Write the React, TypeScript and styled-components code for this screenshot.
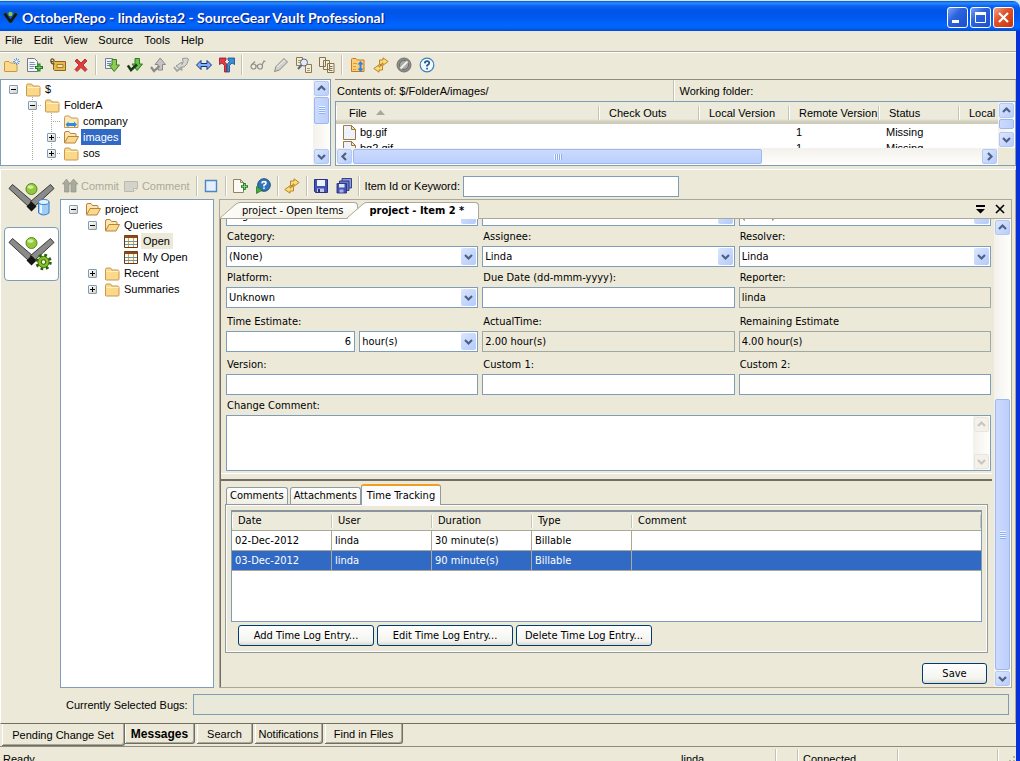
import React from "react";
import styled, { createGlobalStyle, css } from "styled-components";

const face = "#ece9d8";
const line = "#aca899";
const dark = "#716f64";
const edge = "#7f9db9";
const select = "#316ac5";
const sans = '"Liberation Sans", Arial, sans-serif';
const tahoma = '"DejaVu Sans Condensed", Tahoma, "Noto Sans", sans-serif';

const Global = createGlobalStyle`
  * { box-sizing: border-box; }
  html, body { margin: 0; height: 100%; }
  body { background: #cfe6f8; font: 11px/16px ${sans}; color: #000; overflow: hidden; }
  button, input, select, textarea { font: inherit; color: inherit; margin: 0; border-radius: 0; }
  button { border: 0; background: none; padding: 0; }
  svg { display: block; flex: none; }
`;

/* ---------- window frame ---------- */

const Window = styled.div`
  height: 100vh;
  display: flex;
  flex-direction: column;
  padding-top: 1px;
`;

const TitleBar = styled.header`
  flex: none;
  height: 30px;
  display: flex;
  align-items: center;
  gap: 4px;
  padding: 3px 6px 0 3px;
  border-top-right-radius: 7px;
  background: linear-gradient(#0a52c8 0, #2a8cff 2px, #0a63f5 5px, #0055e5 9px, #0058ee 16px, #0066ff 24px, #0062f6 27px, #0048cf 100%);
  color: #fff;
`;

const Title = styled.h1`
  flex: 1;
  margin: 0;
  font: bold 14px/20px Lato, "Noto Sans", sans-serif;
  text-shadow: 1px 1px 1px #0a1883;
  white-space: nowrap;
`;

const CaptionButtons = styled.div`
  display: flex;
  gap: 2px;
`;

const CaptionButton = styled.button<{ $close?: boolean }>`
  width: 21px;
  height: 21px;
  display: grid;
  place-items: center;
  border: 1px solid #fff;
  border-radius: 3px;
  background: ${(p) =>
    p.$close
      ? "linear-gradient(135deg, #f0a58c, #e0532c 40%, #c8340c)"
      : "linear-gradient(135deg, #7ba3f5, #2c63dd 40%, #1a4fd0)"};
`;

const Frame = styled.div`
  flex: 1;
  min-height: 0;
  display: flex;
  flex-direction: column;
  background: ${face};
  border-right: 4px solid #0831d9;
`;

const MenuBar = styled.nav`
  flex: none;
  height: 21px;
  display: flex;
  align-items: center;
  padding: 0 0 2px;
  border-bottom: 1px solid ${line};
`;

const MenuItem = styled.button`
  padding: 0 6px 0 5px;
`;

const ToolBar = styled.div`
  flex: none;
  height: 27px;
  display: flex;
  align-items: center;
  padding-bottom: 3px;
  border-top: 1px solid #fff;
`;

const Tool = styled.button`
  width: 23px;
  height: 22px;
  display: grid;
  place-items: center;
`;

const Rule = styled.span`
  width: 2px;
  height: 20px;
  margin: 0 3px;
  border-left: 1px solid #c5c2b2;
  border-right: 1px solid #fff;
`;

/* ---------- scroll bars ---------- */

const arrows = {
  up: "M1 6 L4.5 2.5 L8 6",
  down: "M1 3 L4.5 6.5 L8 3",
  left: "M6 1 L2.5 4.5 L6 8",
  right: "M3 1 L6.5 4.5 L3 8",
};

const Chevron = ({ dir, off }: { dir: keyof typeof arrows; off?: boolean }) => (
  <svg width="9" height="9" viewBox="0 0 9 9">
    <path d={arrows[dir]} fill="none" stroke={off ? "#c9c7ba" : "#4d6185"} strokeWidth="2.2" />
  </svg>
);

const Bar = styled.div<{ $horizontal?: boolean }>`
  flex: none;
  display: flex;
  flex-direction: ${(p) => (p.$horizontal ? "row" : "column")};
  gap: 1px;
  padding: 1px;
  ${(p) =>
    p.$horizontal
      ? "height: 17px; background: linear-gradient(#f3f1ec, #fefefb);"
      : "width: 17px; background: linear-gradient(90deg, #f3f1ec, #fefefb);"}
`;

const BarButton = styled.button<{ $off?: boolean }>`
  flex: none;
  width: 15px;
  height: 15px;
  display: grid;
  place-items: center;
  border: 1px solid ${(p) => (p.$off ? "#e8e6dc" : "#b4c8f6")};
  border-radius: 2px;
  background: ${(p) => (p.$off ? "#f3f1ea" : "linear-gradient(135deg, #dbe6fe, #b9cdfa)")};
`;

const Space = styled.span<{ $grow: number }>`
  flex: ${(p) => p.$grow} 1 0;
`;

const PlainThumb = styled.span<{ $grow: number; $horizontal?: boolean }>`
  flex: ${(p) => p.$grow} 1 0;
  display: grid;
  place-items: center;
  border: 1px solid #9db8f0;
  border-radius: 2px;
  background: linear-gradient(${(p) => (p.$horizontal ? "180deg" : "90deg")}, #cbdafe, #bccffb);
`;

const Thumb = styled(PlainThumb)`
  &::before {
    content: "";
    ${(p) =>
      p.$horizontal
        ? "width: 8px; height: 6px; background: repeating-linear-gradient(90deg, #eef4fe 0 1px, #8cb0f8 1px 2px);"
        : "width: 6px; height: 8px; background: repeating-linear-gradient(#eef4fe 0 1px, #8cb0f8 1px 2px);"}
  }
`;

type ScrollBarProps = {
  horizontal?: boolean;
  off?: boolean;
  plain?: boolean;
  before: number;
  thumb: number;
  after: number;
};

const ScrollBar = ({ horizontal, off, plain, before, thumb, after }: ScrollBarProps) => {
  const Grip = plain ? PlainThumb : Thumb;
  return (
    <Bar $horizontal={horizontal}>
      <BarButton type="button" $off={off} aria-label={horizontal ? "Scroll left" : "Scroll up"}>
        <Chevron dir={horizontal ? "left" : "up"} off={off} />
      </BarButton>
      {before > 0 && <Space $grow={before} />}
      {thumb > 0 && <Grip $grow={thumb} $horizontal={horizontal} />}
      {after > 0 && <Space $grow={after} />}
      <BarButton type="button" $off={off} aria-label={horizontal ? "Scroll right" : "Scroll down"}>
        <Chevron dir={horizontal ? "right" : "down"} off={off} />
      </BarButton>
    </Bar>
  );
};

/* ---------- icons ---------- */

const Icon = ({ children, size = 16 }: { children: React.ReactNode; size?: number }) => (
  <svg width={size} height={size} viewBox="0 0 16 16">
    {children}
  </svg>
);

const Folder = () => (
  <Icon>
    <path d="M1.500 14V4.500q0-1.500 1.500-1.500h3.500l1.500 2h5.500q1.500 0 1.500 1.500v7.500q0 1-1 1H2.500q-1 0-1-1z" fill="#fbd98a" stroke="#c9984e" />
    <path d="M2.500 6.500h12" stroke="#fff1c4" />
  </Icon>
);

const OpenFolder = () => (
  <Icon>
    <path d="M1.500 13.500V4q0-1.500 1.500-1.500h3l1.500 2h4.500q1 0 1 1v2" fill="#fce6b0" stroke="#b8843c" />
    <path d="M1.500 14L5 7.500h10.500L12 14z" fill="#fbd98a" stroke="#b8843c" />
  </Icon>
);

const MappedFolder = () => (
  <Icon>
    <path d="M1.500 14.500V4.500q0-1.500 1.500-1.500h3.500l1.500 2h5.500q1.500 0 1.500 1.500v8h-13.500z" fill="#fce9b8" stroke="#c9984e" />
    <path d="M2.500 11.500l3-3v1.500h5.500V8.500l3 3-3 3V13H5.500v1.500z" fill="#2f8be0" />
  </Icon>
);

const QueryTable = () => (
  <Icon>
    <path d="M1.500 2.500h13v12h-13z" fill="#fffbe8" stroke="#6a3410" />
    <path d="M1.500 2.500h13v2.500h-13z" fill="#8a4a1c" />
    <path d="M5.500 5v9M10.500 5v9" stroke="#e09a4a" />
    <path d="M2 8.500h12M2 11.500h12" stroke="#5a9ab2" />
  </Icon>
);

const PageIcon = () => (
  <svg width="13" height="15" viewBox="0 0 13 15">
    <path d="M.5.500h8l4 4v10h-12z" fill="#eef2fb" stroke="#9a7b42" />
    <path d="M8.500.500v4h4z" fill="#fbe3a2" stroke="#9a7b42" />
  </svg>
);

const bentArrow = "M6.500 7.500V3H10V.8L15.200 4.500 10 8.200V6H9v1.500z";

const toolIcons: Record<string, React.ReactNode> = {
  "Add folder": (
    <>
      <path d="M.5 14V5.500q0-1 1-1H5l1.500 1.500H12q1 0 1 1V14q0 .5-.5.5H1q-.5 0-.5-.5z" fill="#fbd98a" stroke="#c8964a" />
      <path d="M12.500 1v7M9 4.500h7M10 2l5 5M15 2l-5 5" stroke="#5b9be8" />
      <circle cx="12.500" cy="4.500" r="1.200" fill="#fff" />
    </>
  ),
  "Add files": (
    <>
      <path d="M.5 1.500h7l3 3v10H.5z" fill="#f4f6f8" stroke="#6f7a86" />
      <path d="M2.500 5.500h5M2.500 7.500h6M2.500 9.500h5M2.500 11.500h4" stroke="#7f93a8" />
      <path d="M12 6.500v8M8 10.500h8" stroke="#1f7a28" strokeWidth="3" />
      <path d="M12 7.500v6M9 10.500h6" stroke="#6fd05a" />
    </>
  ),
  Label: (
    <>
      <path d="M4.500 4.500h11v9h-11l-1-1v-7z" fill="#e8b84a" stroke="#8a6420" />
      <path d="M7 7.500h6v3H7z" fill="#f8e6b0" stroke="#a87a2a" />
      <path d="M4.500 7C0 7 0 1.500 2.500 2s2 3-1.500 2.500" fill="none" stroke="#6a4a18" strokeWidth="1.200" />
    </>
  ),
  Delete: <path d="M2 4l2-2 4 4 4-4 2 2-4 4 4 4.500-2 2L8 10.500l-4 4-2-2L6 8z" fill="#e33b3b" stroke="#a51d1d" strokeWidth=".8" />,
  "Get latest": (
    <>
      <path d="M1.500 1.500h7v10h-7z" fill="#eef2f8" stroke="#6f7f98" />
      <path d="M3 4.500h4M3 6.500h4M3 8.500h3" stroke="#6f87b0" />
      <path d="M8 2.500h4.500V8h3L10.200 14.500 5 8h3z" fill="#8ccb52" stroke="#3f7a24" />
    </>
  ),
  "Check out": (
    <>
      <path d="M8 1.500h4.500V7h3L10.200 13.500 5 7h3z" fill="#6cc04a" stroke="#2f7a24" />
      <path d="M.8 8.500L4 13l6-5.500" fill="none" stroke="#1c3a1c" strokeWidth="2.500" />
    </>
  ),
  "Check in": (
    <>
      <path d="M8 13h4.500V7.500h3L10.200 1 5 7.500h3z" fill="#c4c4c4" stroke="#8a8a8a" />
      <path d="M1 10l3 4 5.500-5" fill="none" stroke="#8a8a8a" strokeWidth="2.200" />
    </>
  ),
  "Undo check out": (
    <>
      <path d="M9.500 1.500q5-1 6 .5-1 6-4.500 8H8.500l.5 3.500L3 9l6-4v2.500q2-2 .5-6z" fill="#d6d6d4" stroke="#989898" />
      <path d="M1 10l3 4 5-4" fill="none" stroke="#a4a4a4" strokeWidth="1.800" />
    </>
  ),
  Difference: <path d="M.5 8l4.500-4.500v3h6v-3L15.500 8 11 12.500v-3H5v3z" fill="#7fb2f8" stroke="#14307c" />,
  Merge: (
    <>
      <path d="M.5 1h6.500v2L5.500 4.500 8 7.500V15H5.500V8.500L3 6 .5 7.500z" fill="#e03a4a" stroke="#8e1826" strokeWidth=".8" />
      <path d="M15.500 1H9v2l1.500 1.500L8 7.500V15h2.500V8.500L13 6l2.500 1.500z" fill="#3a8fd8" stroke="#164a86" strokeWidth=".8" />
    </>
  ),
  "View file": (
    <g fill="none" stroke="#8f8f8a" strokeWidth="1.200">
      <circle cx="3.500" cy="9.500" r="2.500" />
      <circle cx="10" cy="9.500" r="2.500" />
      <path d="M6 9q.7-1 1.500 0M1.500 8L5 4.500M12 8L14 4l1.500.5" />
    </g>
  ),
  "Edit file": (
    <>
      <path d="M1.500 14.500l1.500-5L11 1.500l3.500 3.500L6.500 13z" fill="#d0d0cc" stroke="#8a8a86" />
      <path d="M4 10L12 3" stroke="#f4f4f2" />
    </>
  ),
  "Show differences": (
    <>
      <path d="M.5.500h6v8h-6zM9.500 7.500h6v8h-6z" fill="#f2ecd8" stroke="#8a7a5a" />
      <path d="M2 3.500h3M2 5.500h3M11 11.500h3M11 13.500h3" stroke="#a89870" />
      <circle cx="8" cy="5.500" r="3.500" fill="#e2ebf4" stroke="#5d6a78" />
      <path d="M5.500 8L2 12" stroke="#5d6a78" strokeWidth="2" />
    </>
  ),
  History: (
    <g fill="#f4eede" stroke="#85734c">
      <path d="M.5.500h6v9h-6zM4.500 3.500h6v9h-6zM8.500 6.500h6.500v9H8.500z" />
      <path d="M10 9.500h3.500M10 11.500h3.500M10 13.500h3.500" />
    </g>
  ),
  "Working folder": (
    <>
      <path d="M1.500 14.500v-12q0-1 1-1H6l1.500 1.500H14v11.500z" fill="#fbd07a" stroke="#c87a1e" />
      <path d="M3 6.500h4M3 9.500h3M3 12.500h3" stroke="#e09a3a" />
      <path d="M10.500 4l3 3.500h-2v4h2l-3 3.500-3-3.500h2v-4h-2z" fill="#2f7fe0" />
    </>
  ),
  Refresh: (
    <g fill="#f9dc78" stroke="#b87a1c" strokeWidth=".9">
      <path d={bentArrow} />
      <path d={bentArrow} transform="rotate(180 8 8)" />
    </g>
  ),
  Cancel: (
    <>
      <circle cx="8" cy="8" r="7" fill="#8a8a86" stroke="#767672" />
      <circle cx="8" cy="8" r="4.500" fill="#a8a8a4" stroke="#6e6e6a" />
      <path d="M4.500 11.500l7-7" stroke="#f2f2ee" strokeWidth="2" />
    </>
  ),
  Help: (
    <>
      <circle cx="8" cy="8" r="6.800" fill="#f4f9fe" stroke="#3f7fb8" strokeWidth="1.200" />
      <path d="M5.800 6.300Q6 4.200 8.100 4.200t2.200 1.900Q10.300 7.300 8 8.500v1" fill="none" stroke="#1c5a96" strokeWidth="1.700" />
      <path d="M7.200 10.800h1.700v1.700H7.200z" fill="#1c5a96" />
    </>
  ),
  Commit: (
    <path d="M4.500 1L.5 6h2v8H7V6h1L4.500 1zM11.500 1l-4 5h1.500v8h5V6h2z" fill="#aaa99e" stroke="#94938a" strokeWidth=".7" />
  ),
  Comment: (
    <>
      <path d="M1.500 3.500h13v7l-4 3h-9z" fill="#d4d3ca" stroke="#bab9ae" />
      <path d="M14.500 10.500h-4v3" fill="#f0efe8" stroke="#bab9ae" />
    </>
  ),
  "Open query": <path d="M2.500 2.500h11v11h-11z" fill="#e4eefc" stroke="#4a86c8" strokeWidth="1.400" />,
  "New item": (
    <>
      <path d="M1.500 1.500h7l3 3v10h-10z" fill="#fbfaf2" stroke="#8f8560" />
      <path d="M8.500 1.500v3h3z" fill="#f6e6b0" stroke="#8f8560" />
      <path d="M12.500 5v7M9 8.500h7" stroke="#1f7a28" strokeWidth="2.600" />
      <path d="M12.500 6v5M10 8.500h5" stroke="#7fd66a" />
    </>
  ),
  "Run query": (
    <>
      <circle cx="9" cy="7" r="6.300" fill="#2f74b8" stroke="#1a4a80" />
      <path d="M6.800 5.300Q7 3.600 9 3.600t2 1.600Q11 6.200 9 7.300v1.200" fill="none" stroke="#fff" strokeWidth="1.600" />
      <path d="M8.200 9.500h1.600V11H8.200z" fill="#fff" />
      <path d="M1.500 8.500l6 3.500-6 3.500z" fill="#3fae3a" stroke="#1c6a22" strokeWidth=".7" />
    </>
  ),
  Save: (
    <>
      <path d="M1.500 1.500h13v13h-12l-1-1z" fill="#4452b4" stroke="#28327e" />
      <path d="M4 2h8v6H4z" fill="#eef2fc" />
      <path d="M4 10.500h7V14H4z" fill="#c2c8e4" />
      <path d="M5 11h2v3H5z" fill="#28327e" />
    </>
  ),
  "Save all": (
    <g stroke="#28327e" strokeWidth=".9">
      <path d="M6 .5h9.500V10H6z" fill="#8d97dc" />
      <path d="M3.500 3H13v9.500H3.500z" fill="#6a76c8" />
      <path d="M1 5.500h9.500V15H1z" fill="#4452b4" />
      <path d="M3 6h5.500v3.500H3z" fill="#dfe4f8" stroke="none" />
      <path d="M3.500 11.500h4V14.500h-4z" fill="#a8b0dc" stroke="none" />
    </g>
  ),
};

const ToolIcon = ({ name }: { name: string }) => <Icon>{toolIcons[name]}</Icon>;

const ToolButton = ({ name }: { name: string }) => (
  <Tool type="button" aria-label={name}>
    <ToolIcon name={name} />
  </Tool>
);

const VaultArms = () => (
  <>
    <path d="M1 5.500L4.500 1.500 25 19l-4 5z" fill="#8a8a88" stroke="#3a3a3a" />
    <path d="M46 5.500l-3.500-4L22 19l4 5z" fill="#8a8a88" stroke="#3a3a3a" />
    <path d="M23.500 18.500l5 5-5 5-5-5z" fill="#151515" />
    <circle cx="23.500" cy="6" r="5.500" fill="#93c83e" stroke="#5a8a1c" />
    <ellipse cx="22.500" cy="4" rx="3" ry="1.800" fill="#d2eea0" />
  </>
);

const SourceLogo = () => (
  <svg width="47" height="34" viewBox="0 0 47 34">
    <VaultArms />
    <path d="M30.500 19v11q5 4 10.500 0V19z" fill="#9fcdf6" stroke="#3a80c8" />
    <ellipse cx="35.800" cy="19" rx="5.200" ry="2.500" fill="#e2f2fe" stroke="#3a80c8" />
    <path d="M33 22v8" stroke="#eaf6ff" strokeWidth="2" />
  </svg>
);

const ItemsLogo = () => (
  <svg width="47" height="34" viewBox="0 0 47 34">
    <VaultArms />
    <circle cx="35.500" cy="25" r="6.500" fill="none" stroke="#2f5c0c" strokeWidth="3.500" strokeDasharray="2.550 2.550" />
    <circle cx="35.500" cy="25" r="5.600" fill="#84c024" stroke="#3f740f" />
    <circle cx="35.500" cy="25" r="2.300" fill="#f0f8dc" stroke="#2f5c0c" />
  </svg>
);

/* ---------- explorer area ---------- */

const Upper = styled.section`
  flex: none;
  height: 87px;
  display: flex;
  gap: 4px;
`;

const TreeBox = styled.div<{ $width: string }>`
  flex: none;
  width: ${(p) => p.$width};
  display: flex;
  background: #fff;
  border: 1px solid ${edge};
  overflow: hidden;
`;

const TreeList = styled.ul`
  flex: 1;
  margin: 0;
  padding: 1px 0 0 3px;
  list-style: none;
`;

const TreeRow = styled.li`
  height: 16px;
  display: flex;
  align-items: center;
`;

const Guide = styled.span<{ $down?: boolean; $across?: boolean }>`
  flex: none;
  width: 19px;
  height: 16px;
  display: grid;
  place-items: center;
  background-repeat: no-repeat;
  background-image: ${(p) =>
    [
      p.$down ? "repeating-linear-gradient(#a9a99c 0 1px, transparent 1px 2px)" : "linear-gradient(transparent, transparent)",
      p.$across ? "repeating-linear-gradient(90deg, #a9a99c 0 1px, transparent 1px 2px)" : "linear-gradient(transparent, transparent)",
    ].join(",")};
  background-size: 1px 100%, 10px 1px;
  background-position: 9px 0, 9px 8px;
`;

const Toggle = styled.button`
  width: 9px;
  height: 9px;
  display: grid;
  place-items: center;
  border: 1px solid ${edge};
  border-radius: 1px;
  background: linear-gradient(135deg, #fff, #d4cfc0);
`;

const NodeIcon = styled.span`
  margin: 0 2px 0 2px;
`;

const NodeLabel = styled.span<{ $mark?: "active" | "idle" }>`
  padding: 0 3px 0 2px;
  ${(p) => p.$mark === "active" && css`background: ${select}; color: #fff;`}
  ${(p) => p.$mark === "idle" && css`background: ${face};`}
`;

type Node = { label: string; depth: number; icon: React.ReactNode; box?: "+" | "-"; mark?: "active" | "idle" };

const Tree = ({ nodes, lines }: { nodes: Node[]; lines?: boolean }) => (
  <TreeList>
    {nodes.map((n) => (
      <TreeRow key={n.label}>
        {Array.from({ length: n.depth + 1 }, (_, i) => (
          <Guide key={i} $down={lines && i > 0} $across={lines && i > 0 && i === n.depth}>
            {i === n.depth && n.box && (
              <Toggle type="button" aria-label={(n.box === "+" ? "Expand " : "Collapse ") + n.label}>
                <svg width="5" height="5" viewBox="0 0 5 5">
                  <path d={n.box === "+" ? "M0 2.500h5M2.500 0v5" : "M0 2.500h5"} stroke="#000" />
                </svg>
              </Toggle>
            )}
          </Guide>
        ))}
        <NodeIcon>{n.icon}</NodeIcon>
        <NodeLabel $mark={n.mark}>{n.label}</NodeLabel>
      </TreeRow>
    ))}
  </TreeList>
);

const Contents = styled.div`
  flex: 1;
  min-width: 0;
  display: flex;
  flex-direction: column;
`;

const PathBar = styled.div`
  flex: none;
  height: 22px;
  display: flex;
  border-top: 1px solid #8f8c7e;
  line-height: 22px;
`;

const PathPart = styled.span`
  flex: 1;
  padding-left: 2px;
  border-right: 1px solid #c5c2b2;
  & + & { padding-left: 5px; border-left: 1px solid #fff; }
`;

const FileBox = styled.div`
  flex: 1;
  min-height: 0;
  display: flex;
  border: 1px solid ${edge};
  background: #fff;
`;

const FileMain = styled.div`
  flex: 1;
  min-width: 0;
  display: flex;
  flex-direction: column;
`;

const FileView = styled.div`
  flex: 1;
  min-height: 0;
  overflow: hidden;
`;

const FileTable = styled.table`
  width: 760px;
  table-layout: fixed;
  border-collapse: separate;
  border-spacing: 0;
  th {
    height: 22px;
    padding: 0 0 1px 10px;
    font-weight: normal;
    text-align: left;
    white-space: nowrap;
    background: linear-gradient(90deg, #fff, #fff) 0 4px / 1px 14px no-repeat,
      linear-gradient(90deg, #c7c5b2, #c7c5b2) 100% 4px / 1px 14px no-repeat,
      linear-gradient(#ebeadb 17px, #d6d2c2 19px, #cbc7b8);
  }
  th:first-child { padding-left: 13px; }
  td { height: 16px; padding: 0 0 0 7px; line-height: 16px; white-space: nowrap; }
`;

const HeadLabel = styled.span`
  display: flex;
  align-items: center;
  gap: 9px;
`;

const FileName = styled.span`
  display: flex;
  align-items: center;
  gap: 4px;
  height: 16px;
`;

const Corner = styled.div`
  display: flex;
  flex-direction: column;
  background: ${face};
  padding-bottom: 17px;
  & > * { flex: 1; }
`;

/* ---------- work item area ---------- */

const Lower = styled.section`
  flex: 1;
  min-height: 0;
  display: flex;
  margin-top: 3px;
  border: 1px solid #fff;
  border-right-color: ${line};
  border-bottom-color: ${dark};
`;

const Side = styled.nav`
  flex: none;
  width: 59px;
  padding: 3px 0 0 3px;
`;

const SideButton = styled.button<{ $on?: boolean }>`
  width: 55px;
  height: 54px;
  display: grid;
  place-items: center;
  border: 1px solid ${(p) => (p.$on ? edge : "transparent")};
  border-radius: 4px;
  background: ${(p) => (p.$on ? "#fff" : "none")};
`;

const Work = styled.div`
  flex: 1;
  min-width: 0;
  display: flex;
  flex-direction: column;
`;

const ItemBar = styled.div`
  flex: none;
  height: 29px;
  display: flex;
  align-items: center;
  padding: 3px 0 0 2px;
  & > ${Rule} { margin: 0 2px; }
`;

const TextTool = styled.button`
  display: flex;
  align-items: center;
  gap: 3px;
  margin-right: 4px;
  color: #aca899;
`;

const KeywordLabel = styled.label`
  margin: 0 3px;
`;

const KeywordBox = styled.input`
  width: 216px;
  height: 21px;
  border: 1px solid ${edge};
  background: #fff;
`;

const Split = styled.div`
  flex: 1;
  min-height: 0;
  display: flex;
  gap: 5px;
`;

const Document = styled.div`
  flex: 1;
  min-width: 0;
  display: flex;
  flex-direction: column;
  margin-right: 3px;
  border: 1px solid ${line};
  font-family: ${tahoma};
`;

const TabStrip = styled.div`
  flex: none;
  height: 19px;
  display: flex;
  align-items: flex-end;
  border-bottom: 1px solid ${line};
`;

const DocTab = styled.button<{ $on?: boolean }>`
  height: 16px;
  display: flex;
  white-space: nowrap;
  ${(p) => p.$on && css`
    margin: 0 0 -1px -11px;
    height: 17px;
    font-weight: bold;
  `}
`;

const DocTabText = styled.span<{ $on?: boolean }>`
  padding: 0 14px 0 2px;
  height: 100%;
  border: solid ${line};
  border-width: 1px 1px 0 0;
  border-top-right-radius: 4px;
  background: ${(p) => (p.$on ? "#fff" : "linear-gradient(#fff, #f3f1e4)")};
  line-height: 15px;
`;

const Slant = ({ on }: { on?: boolean }) => (
  <svg width="20" height={on ? 17 : 16} viewBox={on ? "0 0 20 17" : "0 0 20 16"}>
    <path d={on ? "M0 17L16 2q2-1.500 4-1.500V17z" : "M0 16L16 2q2-1.500 4-1.500V16z"} fill={on ? "#fff" : "#fbfaf4"} />
    <path d="M0 16L16 2q2-1.500 4-1.500" fill="none" stroke={line} />
  </svg>
);

const StripTools = styled.div`
  flex: 1;
  height: 18px;
  display: flex;
  align-items: center;
  justify-content: flex-end;
  gap: 10px;
  padding-right: 6px;
`;

const DocBody = styled.div`
  flex: 1;
  min-height: 0;
  display: flex;
`;

const ScrollView = styled.div`
  flex: 1;
  min-width: 0;
  display: flex;
  flex-direction: column;
  border-left: 1px solid ${dark};
  margin-right: 2px;
  overflow: hidden;
`;

const Form = styled.form`
  flex: none;
  display: flex;
  flex-direction: column;
  gap: 2px;
  margin-top: -14px;
  padding: 0 1px 2px 5px;
`;

const FieldRow = styled.div<{ $apart?: number }>`
  display: grid;
  grid-template-columns: repeat(3, 1fr);
  gap: 4px;
  padding-top: ${(p) => p.$apart ?? 0}px;
`;

const Field = styled.div`
  min-width: 0;
  display: flex;
  flex-direction: column;
`;

const Label = styled.label`
  padding: 1px 0 1px 1px;
  line-height: 16px;
  white-space: nowrap;
`;

const TextBox = styled.input<{ $right?: boolean }>`
  width: 100%;
  min-width: 0;
  height: 21px;
  padding: 0 3px 0 2px;
  border: 1px solid ${edge};
  background: #fff;
  ${(p) => p.$right && "text-align: right;"}
  &:read-only { background: ${face}; border-color: #a0a8a4; }
`;

const SelectWrap = styled.div`
  position: relative;
  min-width: 0;
  width: 100%;
`;

const SelectBox = styled.select`
  appearance: none;
  display: block;
  width: 100%;
  height: 21px;
  padding: 0 20px 0 2px;
  border: 1px solid ${edge};
  background: #fff;
`;

const DropMark = styled.span`
  position: absolute;
  top: 2px;
  right: 2px;
  width: 15px;
  height: 17px;
  display: grid;
  place-items: center;
  border-radius: 2px;
  background: linear-gradient(135deg, #dbe6fe, #b4cafa);
  pointer-events: none;
`;

const Pair = styled.div`
  display: grid;
  grid-template-columns: 13fr 12fr;
  gap: 4px;
`;

const CommentBox = styled.div`
  height: 56px;
  display: flex;
  border: 1px solid ${edge};
  background: #fff;
`;

const CommentText = styled.textarea`
  flex: 1;
  border: 0;
  resize: none;
  padding: 2px;
`;

const Splitter = styled.div`
  flex: none;
  height: 8px;
  border-top: 1px solid #fff;
  border-bottom: 2px solid ${dark};
`;

const Pane = styled.section`
  flex: 1;
  min-height: 0;
  display: flex;
  flex-direction: column;
  padding: 3px 4px;
`;

const PaneTabs = styled.div`
  display: flex;
  align-items: flex-end;
  gap: 2px;
  height: 20px;
  padding-left: 1px;
`;

const PaneTab = styled.button<{ $on?: boolean }>`
  height: 17px;
  padding: 0 3px;
  border: 1px solid #919b9c;
  border-bottom: 0;
  border-radius: 3px 3px 0 0;
  background: linear-gradient(#fff, #f0efe6);
  white-space: nowrap;
  ${(p) => p.$on && css`
    position: relative;
    height: 21px;
    margin: 0 0 -1px -2px;
    padding: 0 5px;
    border-top: 2px solid #f0a020;
    background: #fcfcfe;
  `}
`;

const Page = styled.div`
  flex: 1;
  min-height: 0;
  display: flex;
  flex-direction: column;
  padding: 5px;
  border: 1px solid #919b9c;
  box-shadow: inset 0 0 0 1px #fcfcfe;
`;

const LogBox = styled.div`
  flex: 1;
  min-height: 0;
  border: 1px solid ${edge};
  border-top: 2px solid #8a949c;
  background: #fff;
  overflow: hidden;
`;

const LogTable = styled.table`
  width: 100%;
  table-layout: fixed;
  border-collapse: separate;
  border-spacing: 0;
  th {
    height: 19px;
    padding: 0 0 0 6px;
    font-weight: normal;
    text-align: left;
    border-bottom: 1px solid ${line};
    background: linear-gradient(90deg, #fff, #fff) 0 3px / 1px 13px no-repeat,
      linear-gradient(90deg, #c7c5b2, #c7c5b2) 100% 3px / 1px 13px no-repeat, #ebeadb;
  }
  td {
    height: 20px;
    padding: 0 0 0 3px;
    border: solid ${line};
    border-width: 0 1px 1px 0;
  }
  td:last-child { border-right: 0; }
`;

const LogRow = styled.tr<{ $on?: boolean }>`
  ${(p) => p.$on && css`background: ${select}; color: #fff;`}
`;

const Actions = styled.div<{ $end?: boolean }>`
  flex: none;
  display: flex;
  gap: 3px;
  padding: ${(p) => (p.$end ? "10px 1px 0 0" : "3px 0 1px 7px")};
  ${(p) => p.$end && "justify-content: flex-end;"}
`;

const PushButton = styled.button<{ $wide?: boolean }>`
  width: ${(p) => (p.$wide ? 136 : 65)}px;
  height: 21px;
  border: 1px solid #003c74;
  border-radius: 3px;
  background: linear-gradient(#fff, #f3f3ef 80%, #dcd8cc);
  white-space: nowrap;
`;

const BugRow = styled.div`
  flex: none;
  height: 35px;
  display: flex;
  align-items: center;
  gap: 5px;
  padding: 0 6px 2px 6px;
`;

const BugBox = styled.input`
  flex: 1;
  height: 21px;
  border: 1px solid ${edge};
  background: #e9e9d9;
`;

/* ---------- bottom strips ---------- */

const Pages = styled.div`
  flex: none;
  height: 22px;
  display: flex;
  align-items: flex-start;
  gap: 2px;
  padding-left: 2px;
`;

const PageTab = styled.button<{ $width: number; $kind?: "front" | "bold" }>`
  width: ${(p) => p.$width}px;
  height: 20px;
  border: solid ${dark};
  border-width: 0 1px 1px 0;
  border-radius: 0 0 3px 0;
  box-shadow: inset 1px 0 #fff, inset -1px -1px ${line};
  white-space: nowrap;
  ${(p) => p.$kind === "front" && "height: 22px; margin-right: -2px;"}
  ${(p) => p.$kind === "bold" && "font: bold 12px/16px " + sans + ";"}
`;

const StatusBar = styled.footer`
  flex: none;
  height: 15px;
  display: flex;
  border-top: 1px solid #8f8c7e;
  overflow: hidden;
  line-height: 20px;
`;

const StatusPart = styled.span<{ $width?: number }>`
  ${(p) => (p.$width ? `flex: none; width: ${p.$width}px;` : "flex: 1;")}
  margin-top: 2px;
  padding-left: 5px;
  white-space: nowrap;
`;

const StatusCell = styled(StatusPart)`
  border-right: 1px solid #c5c2b2;
  box-shadow: 1px 0 #fff;
`;

const StatusFirst = styled(StatusPart)`
  padding-left: 3px;
`;

const StatusGrip = styled.span`
  flex: none;
  width: 18px;
  padding: 9px 0 0 10px;
`;

/* ---------- data ---------- */

const menus = ["File", "Edit", "View", "Source", "Tools", "Help"];

const toolGroups = [
  ["Add folder", "Add files", "Label", "Delete"],
  ["Get latest", "Check out", "Check in", "Undo check out", "Difference", "Merge"],
  ["View file", "Edit file", "Show differences", "History"],
  ["Working folder", "Refresh", "Cancel", "Help"],
];

const folders: Node[] = [
  { label: "$", depth: 0, box: "-", icon: <Folder /> },
  { label: "FolderA", depth: 1, box: "-", icon: <Folder /> },
  { label: "company", depth: 2, icon: <MappedFolder /> },
  { label: "images", depth: 2, box: "+", icon: <OpenFolder />, mark: "active" },
  { label: "sos", depth: 2, box: "+", icon: <Folder /> },
];

const queries: Node[] = [
  { label: "project", depth: 0, box: "-", icon: <OpenFolder /> },
  { label: "Queries", depth: 1, box: "-", icon: <OpenFolder /> },
  { label: "Open", depth: 2, icon: <QueryTable />, mark: "idle" },
  { label: "My Open", depth: 2, icon: <QueryTable /> },
  { label: "Recent", depth: 1, box: "+", icon: <Folder /> },
  { label: "Summaries", depth: 1, box: "+", icon: <Folder /> },
];

const log = [
  ["02-Dec-2012", "linda", "30 minute(s)", "Billable", ""],
  ["03-Dec-2012", "linda", "90 minute(s)", "Billable", ""],
];

const Drop = ({ id, value, name }: { id?: string; value: string; name?: string }) => (
  <SelectWrap>
    <SelectBox id={id} aria-label={name}>
      <option>{value}</option>
    </SelectBox>
    <DropMark>
      <Chevron dir="down" />
    </DropMark>
  </SelectWrap>
);

const DropField = ({ label, value, id }: { label: string; value: string; id: string }) => (
  <Field>
    <Label htmlFor={id}>{label}</Label>
    <Drop id={id} value={value} />
  </Field>
);

const TextField = ({ label, id, value = "", fixed }: { label: string; id: string; value?: string; fixed?: boolean }) => (
  <Field>
    <Label htmlFor={id}>{label}</Label>
    <TextBox id={id} defaultValue={value} readOnly={fixed} />
  </Field>
);

export default function App() {
  return (
    <Window>
      <Global />
      <TitleBar>
        <svg width="15" height="14" viewBox="0 0 15 14">
          <path d="M0 3l3-1.500L7.500 8 12 1.500 15 3 8.500 12h-2z" fill="#101820" stroke="#4a5a50" strokeWidth=".5" />
          <circle cx="7.500" cy="3" r="2.200" fill="#8cc63f" />
        </svg>
        <Title>OctoberRepo - lindavista2 - SourceGear Vault Professional</Title>
        <CaptionButtons>
          <CaptionButton type="button" aria-label="Minimize">
            <svg width="13" height="13" viewBox="0 0 13 13"><path d="M1 9h7v3H1z" fill="#fff" /></svg>
          </CaptionButton>
          <CaptionButton type="button" aria-label="Maximize">
            <svg width="13" height="13" viewBox="0 0 13 13">
              <path d="M1.500 2.500h10v9h-10z" fill="none" stroke="#fff" />
              <path d="M1 1h11v3H1z" fill="#fff" />
            </svg>
          </CaptionButton>
          <CaptionButton type="button" aria-label="Close" $close>
            <svg width="13" height="13" viewBox="0 0 13 13"><path d="M2 2l9 9M11 2l-9 9" stroke="#fff" strokeWidth="2.200" /></svg>
          </CaptionButton>
        </CaptionButtons>
      </TitleBar>

      <Frame>
        <MenuBar>
          {menus.map((m) => (
            <MenuItem key={m} type="button">{m}</MenuItem>
          ))}
        </MenuBar>

        <ToolBar>
          {toolGroups.map((group, i) => (
            <React.Fragment key={i}>
              {i > 0 && <Rule />}
              {group.map((name) => <ToolButton key={name} name={name} />)}
            </React.Fragment>
          ))}
        </ToolBar>

        <Upper>
          <TreeBox $width="331px">
            <Tree nodes={folders} lines />
            <ScrollBar before={0} thumb={26} after={24} />
          </TreeBox>
          <Contents>
            <PathBar>
              <PathPart>Contents of: $/FolderA/images/</PathPart>
              <PathPart>Working folder:</PathPart>
            </PathBar>
            <FileBox>
              <FileMain>
                <FileView>
                  <FileTable>
                    <colgroup>
                      <col width="263" />
                      <col width="100" />
                      <col width="90" />
                      <col width="90" />
                      <col width="80" />
                      <col width="137" />
                    </colgroup>
                    <thead>
                      <tr>
                        <th>
                          <HeadLabel>
                            File
                            <svg width="9" height="5" viewBox="0 0 9 5"><path d="M0 5L4.500 0 9 5z" fill="#aca899" /></svg>
                          </HeadLabel>
                        </th>
                        <th>Check Outs</th>
                        <th>Local Version</th>
                        <th>Remote Version</th>
                        <th>Status</th>
                        <th>Local</th>
                      </tr>
                    </thead>
                    <tbody>
                      {["bg.gif", "bg2.gif"].map((name) => (
                        <tr key={name}>
                          <td><FileName><PageIcon />{name}</FileName></td>
                          <td />
                          <td />
                          <td>1</td>
                          <td>Missing</td>
                          <td />
                        </tr>
                      ))}
                    </tbody>
                  </FileTable>
                </FileView>
                <ScrollBar horizontal before={0} thumb={408} after={218} />
              </FileMain>
              <Corner>
                <ScrollBar plain before={0} thumb={8} after={1} />
              </Corner>
            </FileBox>
          </Contents>
        </Upper>

        <Lower>
          <Side>
            <SideButton type="button" aria-label="Source control"><SourceLogo /></SideButton>
            <SideButton type="button" aria-label="Work items" $on><ItemsLogo /></SideButton>
          </Side>
          <Work>
            <ItemBar>
              <TextTool type="button"><ToolIcon name="Commit" />Commit</TextTool>
              <TextTool type="button"><ToolIcon name="Comment" />Comment</TextTool>
              <Rule />
              <ToolButton name="Open query" />
              <Rule />
              <ToolButton name="New item" />
              <ToolButton name="Run query" />
              <Rule />
              <ToolButton name="Refresh" />
              <Rule />
              <ToolButton name="Save" />
              <ToolButton name="Save all" />
              <Rule />
              <KeywordLabel htmlFor="keyword">Item Id or Keyword:</KeywordLabel>
              <KeywordBox id="keyword" />
            </ItemBar>

            <Split>
              <TreeBox $width="154px">
                <Tree nodes={queries} />
              </TreeBox>

              <Document>
                <TabStrip>
                  <DocTab type="button"><Slant /><DocTabText>project - Open Items</DocTabText></DocTab>
                  <DocTab type="button" $on><Slant on /><DocTabText $on>project - Item 2 *</DocTabText></DocTab>
                  <StripTools>
                    <button type="button" aria-label="Tab list">
                      <svg width="9" height="9" viewBox="0 0 9 9"><path d="M0 0h9v2H0zM0 4h9L4.500 8.500z" /></svg>
                    </button>
                    <button type="button" aria-label="Close tab">
                      <svg width="10" height="10" viewBox="0 0 10 10"><path d="M1 1l8 8M9 1L1 9" stroke="#000" strokeWidth="1.600" /></svg>
                    </button>
                  </StripTools>
                </TabStrip>

                <DocBody>
                  <ScrollView>
                    <Form>
                      <FieldRow>
                        <Drop name="Type" value="Bug" />
                        <Drop name="Priority" value="Unknown" />
                        <Drop name="Milestone" value="(None)" />
                      </FieldRow>
                      <FieldRow>
                        <DropField id="category" label="Category:" value="(None)" />
                        <DropField id="assignee" label="Assignee:" value="Linda" />
                        <DropField id="resolver" label="Resolver:" value="Linda" />
                      </FieldRow>
                      <FieldRow>
                        <DropField id="platform" label="Platform:" value="Unknown" />
                        <TextField id="due" label="Due Date (dd-mmm-yyyy):" />
                        <TextField id="reporter" label="Reporter:" value="linda" fixed />
                      </FieldRow>
                      <FieldRow $apart={3}>
                        <Field>
                          <Label htmlFor="estimate">Time Estimate:</Label>
                          <Pair>
                            <TextBox id="estimate" defaultValue="6" $right />
                            <Drop name="Estimate unit" value="hour(s)" />
                          </Pair>
                        </Field>
                        <TextField id="actual" label="ActualTime:" value="2.00 hour(s)" fixed />
                        <TextField id="remaining" label="Remaining Estimate" value="4.00 hour(s)" fixed />
                      </FieldRow>
                      <FieldRow $apart={2}>
                        <TextField id="version" label="Version:" />
                        <TextField id="custom1" label="Custom 1:" />
                        <TextField id="custom2" label="Custom 2:" />
                      </FieldRow>
                      <Field>
                        <Label htmlFor="comment">Change Comment:</Label>
                        <CommentBox>
                          <CommentText id="comment" />
                          <ScrollBar off before={1} thumb={0} after={0} />
                        </CommentBox>
                      </Field>
                    </Form>

                    <Splitter />

                    <Pane>
                      <PaneTabs>
                        <PaneTab type="button">Comments</PaneTab>
                        <PaneTab type="button">Attachments</PaneTab>
                        <PaneTab type="button" $on>Time Tracking</PaneTab>
                      </PaneTabs>
                      <Page>
                        <LogBox>
                          <LogTable>
                            <colgroup>
                              <col width="100" />
                              <col width="100" />
                              <col width="100" />
                              <col width="100" />
                              <col />
                            </colgroup>
                            <thead>
                              <tr>
                                {["Date", "User", "Duration", "Type", "Comment"].map((h) => <th key={h}>{h}</th>)}
                              </tr>
                            </thead>
                            <tbody>
                              {log.map((row, i) => (
                                <LogRow key={row[0]} $on={i === 1}>
                                  {row.map((cell, j) => <td key={j}>{cell}</td>)}
                                </LogRow>
                              ))}
                            </tbody>
                          </LogTable>
                        </LogBox>
                        <Actions>
                          <PushButton type="button" $wide>Add Time Log Entry...</PushButton>
                          <PushButton type="button" $wide>Edit Time Log Entry...</PushButton>
                          <PushButton type="button" $wide>Delete Time Log Entry...</PushButton>
                        </Actions>
                      </Page>
                      <Actions $end>
                        <PushButton type="button">Save</PushButton>
                      </Actions>
                    </Pane>
                  </ScrollView>
                  <ScrollBar before={162} thumb={269} after={0} />
                </DocBody>
              </Document>
            </Split>

            <BugRow>
              <label htmlFor="bugs">Currently Selected Bugs:</label>
              <BugBox id="bugs" readOnly />
            </BugRow>
          </Work>
        </Lower>

        <Pages>
          <PageTab type="button" $width={123} $kind="front">Pending Change Set</PageTab>
          <PageTab type="button" $width={70} $kind="bold">Messages</PageTab>
          <PageTab type="button" $width={56}>Search</PageTab>
          <PageTab type="button" $width={68}>Notifications</PageTab>
          <PageTab type="button" $width={78}>Find in Files</PageTab>
        </Pages>

        <StatusBar>
          <StatusFirst>Ready</StatusFirst>
          <StatusCell $width={100}>linda</StatusCell>
          <StatusCell $width={22} />
          <StatusCell $width={100}>Connected</StatusCell>
          <StatusCell $width={100} />
          <StatusGrip>
            <svg width="8" height="6" viewBox="0 0 8 6"><path d="M5 0h2v2H5zM5 4h2v2H5zM1 4h2v2H1z" fill="#b8b4a2" /></svg>
          </StatusGrip>
        </StatusBar>
      </Frame>
    </Window>
  );
}
